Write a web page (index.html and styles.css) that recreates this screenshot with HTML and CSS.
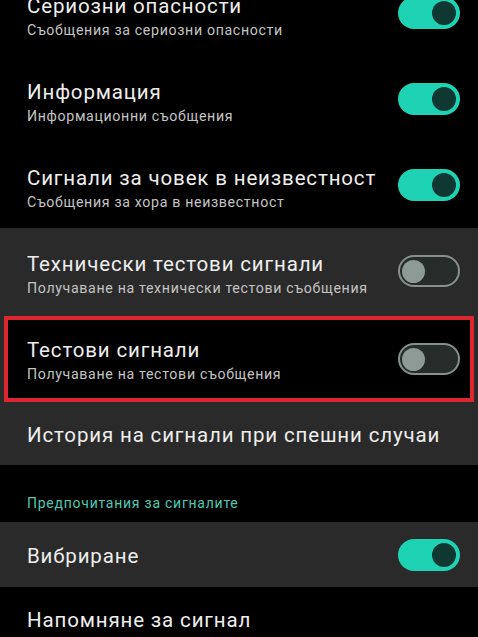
FILE: index.html
```html
<!DOCTYPE html>
<html lang="bg">
<head>
<meta charset="utf-8">
<link rel="stylesheet" href="styles.css">
</head>
<body>
<div class="screen">
  <div class="group group-dark first">
    <div class="row">
      <div class="text">
        <div class="title">Сериозни опасности</div>
        <div class="sub">Съобщения за сериозни опасности</div>
      </div>
      <span class="switch on"><span class="knob"></span></span>
    </div>
    <div class="row">
      <div class="text">
        <div class="title">Информация</div>
        <div class="sub">Информационни съобщения</div>
      </div>
      <span class="switch on"><span class="knob"></span></span>
    </div>
    <div class="row">
      <div class="text">
        <div class="title">Сигнали за човек в неизвестност</div>
        <div class="sub">Съобщения за хора в неизвестност</div>
      </div>
      <span class="switch on"><span class="knob"></span></span>
    </div>
  </div>
  <div class="group group-gray">
    <div class="row lead">
      <div class="text">
        <div class="title">Технически тестови сигнали</div>
        <div class="sub">Получаване на технически тестови съобщения</div>
      </div>
      <span class="switch off"><span class="knob"></span></span>
    </div>
    <div class="row highlighted">
      <div class="text">
        <div class="title">Тестови сигнали</div>
        <div class="sub">Получаване на тестови съобщения</div>
      </div>
      <span class="switch off"><span class="knob"></span></span>
    </div>
    <div class="row single">
      <div class="title">История на сигнали при спешни случаи</div>
    </div>
  </div>
  <div class="section-header">Предпочитания за сигналите</div>
  <div class="group group-gray">
    <div class="row single vib">
      <div class="title">Вибриране</div>
      <span class="switch on"><span class="knob"></span></span>
    </div>
  </div>
  <div class="group group-dark">
    <div class="row single">
      <div class="title">Напомняне за сигнал</div>
    </div>
  </div>
</div>
</body>
</html>
```

FILE: styles.css
```css
html, body {
  margin: 0;
  padding: 0;
  background: #000;
}
body {
  font-family: Roboto, "Noto Sans", "Liberation Sans", sans-serif;
  color: #f0f0f0;
  width: 478px;
  height: 637px;
  overflow: hidden;
}
.screen {
  display: flex;
  flex-direction: column;
}
.group-dark { background: #000; }
.group-gray { background: #2a2a2a; }
.first { margin-top: -30px; }
.row {
  display: flex;
  align-items: center;
  justify-content: space-between;
  height: 86px;
  box-sizing: border-box;
  padding: 0 18px 0 27px;
}
.row .text {
  display: flex;
  flex-direction: column;
  padding-top: 8px;
}
.row.lead {
  height: 88px;
  padding-bottom: 2px;
}
.title {
  font-size: 20.5px;
  line-height: 24px;
  letter-spacing: 0.85px;
  color: #eeeeee;
  white-space: nowrap;
}
.sub {
  font-size: 14.2px;
  line-height: 20px;
  letter-spacing: 0.65px;
  margin-top: 2px;
  color: #c4c4c4;
  white-space: nowrap;
}
.row.highlighted {
  height: 86px;
  margin: 0 4px;
  border: 4px solid #dd2630;
  background: #000;
  padding: 0 10px 0 19px;
}
.row.highlighted .text { padding-top: 4px; }
.row.single {
  height: 63px;
}
.row.single .title { padding-top: 3px; }
.row.vib { height: 65px; }
.section-header {
  font-size: 14px;
  line-height: 20px;
  letter-spacing: 0.75px;
  color: #4fcab2;
  padding: 28px 27px 9px;
}
.switch {
  flex: none;
  width: 62px;
  height: 32px;
  box-sizing: border-box;
  border-radius: 16px;
  display: flex;
  align-items: center;
  padding: 0 4px;
}
.switch .knob {
  width: 24px;
  height: 24px;
  border-radius: 50%;
  display: block;
}
.switch.on {
  background: #1dd3b4;
  justify-content: flex-end;
}
.switch.on .knob { background: #0f3833; }
.switch.off {
  background: #262c2a;
  border: 2.5px solid #85918d;
  justify-content: flex-start;
  padding: 0 2px;
}
.switch.off .knob { background: #8d9a95; width: 23px; height: 23px; }
```
